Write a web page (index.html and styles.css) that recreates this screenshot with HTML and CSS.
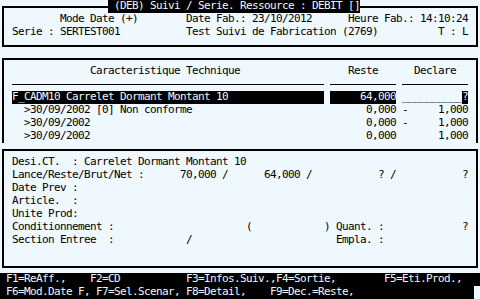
FILE: index.html
```html
<!DOCTYPE html>
<html lang="fr">
<head>
    <meta charset="UTF-8">
    <title>(DEB) Suivi / Serie</title>
    <link rel="stylesheet" href="styles.css">
</head>
<body>
    <div class="screen">
        <!-- En-tete -->
        <div class="panel panel-head">
            <div class="title line"><span class="inv"> (DEB) Suivi / Serie. Ressource : DEBIT []</span></div>
            <div class="line">         Mode Date (+)        Date Fab.: 23/10/2012      Heure Fab.: 14:10:24</div>
            <div class="line"> Serie : SERTEST001           Test Suivi de Fabrication (2769)          T : L</div>
        </div>

        <!-- Liste des caracteristiques -->
        <div class="panel panel-list">
            <div class="line">              Caracteristique Technique                  Reste      Declare</div>
            <div class="rules">
                <div class="rule rule-desc"></div>
                <div class="rule rule-qty"></div>
                <div class="rule rule-qty"></div>
            </div>
            <div class="line"> <span class="inv">F_CADM10 Carrelet Dormant Montant 10                </span> <span class="inv">     64,000</span> __________<span class="inv">?</span></div>
            <div class="line">   &gt;30/09/2002 [0] Non conforme                             0,000 -     1,000</div>
            <div class="line">   &gt;30/09/2002                                              0,000 -     1,000</div>
            <div class="line">   &gt;30/09/2002                                              0,000       1,000</div>
        </div>

        <!-- Detail -->
        <div class="panel panel-detail">
            <div class="line"> Desi.CT.  : Carrelet Dormant Montant 10</div>
            <div class="line"> Lance/Reste/Brut/Net :      70,000 /      64,000 /           ? /           ?</div>
            <div class="line"> Date Prev :</div>
            <div class="line"> Article.  :</div>
            <div class="line"> Unite Prod:</div>
            <div class="line"> Conditionnement :                      (            ) Quant. :             ?</div>
            <div class="line"> Section Entree  :            /                        Empla. :</div>
            <div class="line"></div>
        </div>

        <!-- Touches de fonction -->
        <div class="fkeys">
            <div class="line"> F1=ReAff.,    F2=CD           F3=Infos.Suiv.,F4=Sortie,        F5=Eti.Prod.,</div>
            <div class="line line-short"> F6=Mod.Date F, F7=Sel.Scenar, F8=Detail,    F9=Dec.=Reste,</div>
        </div>
    </div>
</body>
</html>
```

FILE: styles.css
```css
* {
    margin: 0;
    padding: 0;
    box-sizing: border-box;
}

body {
    width: 480px;
    height: 299px;
    overflow: hidden;
    background-color: #eff7ff;
    color: #000;
    font-family: "DejaVu Sans Mono", monospace;
    font-size: 11px;
    line-height: 12px;
    letter-spacing: -0.6226px;
}

.screen {
    width: 480px;
    height: 299px;
}

.line {
    height: 13px;
    white-space: pre;
}

.inv {
    display: inline-block;
    height: 13px;
    vertical-align: top;
    background-color: #000;
    color: #eff7ff;
}

.panel {
    position: relative;
    width: 476px;
    margin-left: 2px;
    border: 2px solid #000;
    padding-left: 2px;
}

.panel-head {
    margin-top: 6px;
    padding-top: 5px;
    padding-bottom: 6px;
}

.title {
    position: absolute;
    top: -8px;
    left: 104px;
}

.panel-list {
    margin-top: 11px;
    padding-top: 5px;
    border-bottom: none;
}

.rules {
    display: flex;
    gap: 6px;
    height: 13px;
    padding-left: 6px;
}

.rule {
    height: 1px;
    margin-top: 6px;
    background-color: #000;
}

.rule-desc {
    width: 312px;
}

.rule-qty {
    width: 66px;
}

.panel-detail {
    margin-top: 6px;
    padding-top: 5px;
    padding-bottom: 6px;
}

.fkeys {
    margin-top: 5px;
}

.fkeys .line {
    background-color: #000;
    color: #eff7ff;
}

.fkeys .line-short {
    width: 474px;
}
```
